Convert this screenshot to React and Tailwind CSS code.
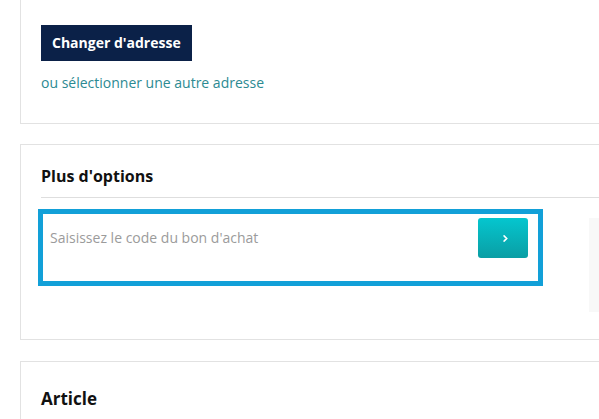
import React from "react";

export default function App() {
  return (
    <div className="w-[599px] h-[419px] overflow-hidden bg-white" style={{ fontFamily: '"Open Sans", "Noto Sans", sans-serif' }}>
      {/* Card 1 */}
      <div className="ml-[20px] w-[640px] border border-t-0 border-[#e2e2e2] pl-[20px] pt-[25px] pb-[30px]">
        <button className="h-[36px] px-[11px] bg-[#0b2148] text-white text-[14px] font-bold leading-[36px]">
          Changer d'adresse
        </button>
        <div className="mt-[12px] text-[14px] leading-[20px] text-[#2c8a92]">
          ou sélectionner une autre adresse
        </div>
      </div>

      {/* Card 2 */}
      <div className="mt-[20px] ml-[20px] w-[640px] border border-[#e2e2e2] pl-[20px] pt-[19px] pb-[27px]">
        <h2 className="text-[16px] font-bold leading-[24px] text-[#111] pb-[9px] border-b border-[#dedede]">
          Plus d'options
        </h2>
        <div className="mt-[11px] flex items-start">
          <div className="-ml-[3px] w-[505px] h-[77px] border-[5px] border-[#12a0d8] flex items-start justify-between pl-[7px] pr-[10px] pt-[4px]">
            <div className="h-[39px] flex items-center text-[14px] text-[#9b9b9b]">
              Saisissez le code du bon d'achat
            </div>
            <button className="w-[50px] h-[40px] rounded-[3px] bg-gradient-to-b from-[#04c6cf] to-[#0a9ea4] flex items-center justify-center pl-[4px]">
              <svg width="5" height="7" viewBox="0 0 5 7">
                <path d="M1.2 1 L3.6 3.5 L1.2 6" stroke="white" strokeWidth="1.8" fill="none" strokeLinecap="round" />
              </svg>
            </button>
          </div>
          <div className="ml-[46px] mt-[9px] w-[60px] h-[94px] bg-[#f8f8f8]"></div>
        </div>
      </div>

      {/* Card 3 */}
      <div className="mt-[21px] ml-[20px] w-[640px] border border-[#e2e2e2] pl-[20px] pt-[25px] pb-[20px]">
        <h2 className="text-[17px] font-bold leading-[24px] text-[#111]">Article</h2>
      </div>
    </div>
  );
}
